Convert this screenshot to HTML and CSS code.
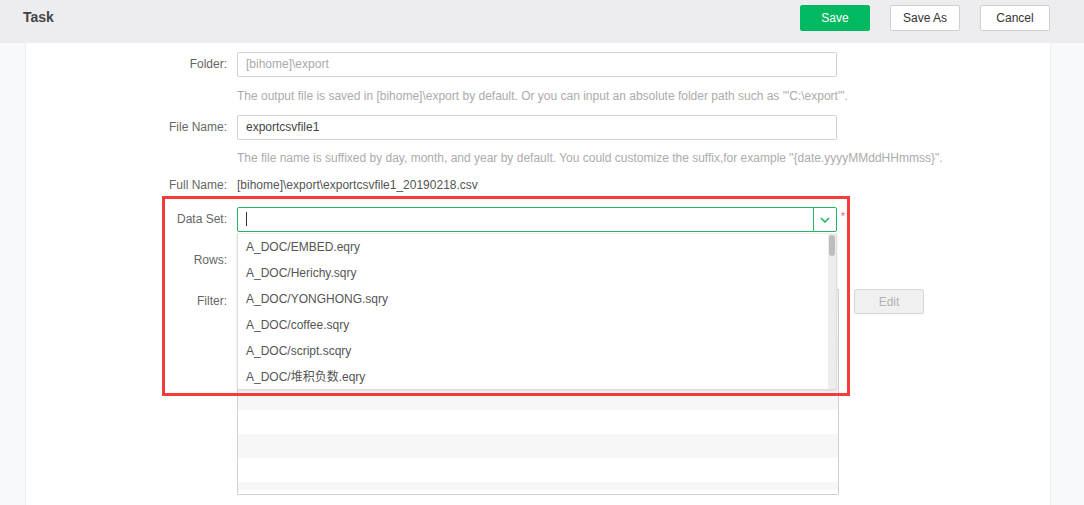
FILE: index.html
```html
<!DOCTYPE html>
<html>
<head>
<meta charset="utf-8">
<link rel="stylesheet" href="styles.css">
</head>
<body>
<header class="header">
  <div class="title">Task</div>
  <div class="actions">
    <button class="btn btn-primary">Save</button>
    <button class="btn">Save As</button>
    <button class="btn">Cancel</button>
  </div>
</header>
<div class="main">
  <div class="side side-left"></div>
  <div class="content">
    <div class="form">
      <div class="row">
        <label class="label">Folder:</label>
        <div class="field"><div class="input input-muted">[bihome]\export</div></div>
      </div>
      <div class="row hint-row hint-1">
        <div class="label"></div>
        <div class="hint">The output file is saved in [bihome]\export by default. Or you can input an absolute folder path such as '"C:\export"'.</div>
      </div>
      <div class="row">
        <label class="label">File Name:</label>
        <div class="field"><div class="input">exportcsvfile1</div></div>
      </div>
      <div class="row hint-row hint-2">
        <div class="label"></div>
        <div class="hint">The file name is suffixed by day, month, and year by default. You could customize the suffix,for example "{date.yyyyMMddHHmmss}".</div>
      </div>
      <div class="row full-row">
        <label class="label">Full Name:</label>
        <div class="text">[bihome]\export\exportcsvfile1_20190218.csv</div>
      </div>
      <div class="row">
        <label class="label">Data Set:</label>
        <div class="field field-select">
          <div class="input input-active"><span class="caret"></span><span class="arrow"><svg width="10" height="6" viewBox="0 0 10 6"><path d="M1 1 L5 5 L9 1" fill="none" stroke="#1db866" stroke-width="1.6"/></svg></span></div>
          <span class="required">*</span>
          <div class="dropdown">
            <div class="options">
              <div class="option">A_DOC/EMBED.eqry</div>
              <div class="option">A_DOC/Herichy.sqry</div>
              <div class="option">A_DOC/YONGHONG.sqry</div>
              <div class="option">A_DOC/coffee.sqry</div>
              <div class="option">A_DOC/script.scqry</div>
              <div class="option">A_DOC/堆积负数.eqry</div>
            </div>
            <div class="scrollbar"><div class="thumb"></div></div>
          </div>
        </div>
      </div>
      <div class="row rows-row">
        <label class="label">Rows:</label>
        <div class="field"><div class="input"></div></div>
      </div>
      <div class="row filter-row">
        <label class="label">Filter:</label>
        <div class="listbox">
          <div class="list-inner">
            <div class="lrow"></div><div class="lrow"></div><div class="lrow"></div><div class="lrow"></div><div class="lrow"></div><div class="lrow"></div><div class="lrow"></div><div class="lrow"></div><div class="lrow"></div>
          </div>
        </div>
        <button class="btn btn-disabled">Edit</button>
      </div>
    </div>
    <div class="highlight"></div>
  </div>
  <div class="side side-right"></div>
</div>
</body>
</html>
```
FILE: styles.css
```css
* { box-sizing: border-box; }
html, body { margin: 0; padding: 0; }
body {
  width: 1084px;
  height: 505px;
  overflow: hidden;
  font-family: "Liberation Sans", Arial, "Noto Sans CJK SC", sans-serif;
  font-size: 12px;
  color: #333;
  background: #fff;
}
.header {
  height: 43px;
  background: #ededef;
  display: flex;
  justify-content: space-between;
  align-items: flex-start;
  padding: 5px 34px 0 23px;
}
.title {
  font-size: 14px;
  font-weight: bold;
  color: #444;
  line-height: 25px;
}
.actions { display: flex; gap: 20px; }
.btn {
  width: 70px;
  height: 26px;
  border: 1px solid #cfcfcf;
  border-radius: 2px;
  background: #fff;
  color: #333;
  font-family: inherit;
  font-size: 12px;
  padding: 0;
}
.btn-primary {
  background: #00b960;
  border-color: #00b960;
  color: #fff;
}
.main {
  display: flex;
  height: 462px;
}
.side-left {
  width: 26px;
  background: #f8f9fb;
  border-right: 1px solid #eeeff1;
}
.side-right {
  width: 34px;
  background: #f8f9fb;
  border-left: 1px solid #eeeff1;
}
.content {
  flex: 1;
  position: relative;
  background: #fff;
}
.form { padding-top: 9px; }
.row {
  display: flex;
  align-items: center;
  gap: 10px;
}
.label {
  width: 201px;
  flex: none;
  text-align: right;
  color: #666;
  line-height: 25px;
}
.field { width: 600px; position: relative; }
.input {
  height: 25px;
  border: 1px solid #d2d2d2;
  border-radius: 2px;
  padding: 0 8px;
  line-height: 23px;
  color: #444;
  position: relative;
}
.input-muted { color: #aaa; }
.hint { color: #ababab; }
.hint-1 { height: 38px; }
.hint-2 { height: 36px; }
.full-row { height: 18px; margin-bottom: 13px; }
.full-row .label { line-height: 18px; }
.text { color: #555; }
.input-active {
  border-color: #1db866;
}
.caret {
  display: inline-block;
  width: 1px;
  height: 14px;
  background: #333;
  vertical-align: middle;
  margin-top: -2px;
}
.arrow {
  position: absolute;
  right: 0;
  top: 0;
  width: 23px;
  height: 23px;
  border-left: 1px solid #1db866;
  display: flex;
  align-items: center;
  justify-content: center;
}
.required {
  position: absolute;
  left: 604px;
  top: 4px;
  color: #f55;
  font-size: 10px;
}
.dropdown {
  position: absolute;
  left: 0;
  top: 26px;
  width: 600px;
  height: 157px;
  background: #fff;
  border: 1px solid #dedede;
  border-top-color: #eee;
  box-shadow: 0 1px 2px rgba(0,0,0,0.12);
  z-index: 5;
  display: flex;
}
.options { flex: 1; }
.option {
  line-height: 26px;
  padding-left: 8px;
  color: #555;
}
.scrollbar {
  width: 8px;
  background: #ededed;
  padding: 1px 1px;
}
.thumb {
  height: 21px;
  background: #bdbdbd;
  border-radius: 3px;
}
.rows-row { margin-top: 16px; }
.filter-row {
  margin-top: 16px;
  align-items: flex-start;
  gap: 10px;
}
.filter-row .label { line-height: 24px; }
.listbox {
  width: 602px;
  height: 206px;
  border: 1px solid #d0d0d0;
  border-radius: 1px;
  padding-bottom: 4px;
}
.list-inner {
  height: 200px;
  overflow: hidden;
}
.lrow { height: 24px; }
.lrow:nth-child(odd) { background: #f7f7f7; }
.btn-disabled {
  margin-left: 5px;
  background: #f0f0f0;
  border-color: #d6d6d6;
  color: #b3b3b3;
  height: 25px;
}
.highlight {
  position: absolute;
  left: 136px;
  top: 153px;
  width: 688px;
  height: 200px;
  border: 3px solid #f53b3b;
  z-index: 10;
  pointer-events: none;
}
```
